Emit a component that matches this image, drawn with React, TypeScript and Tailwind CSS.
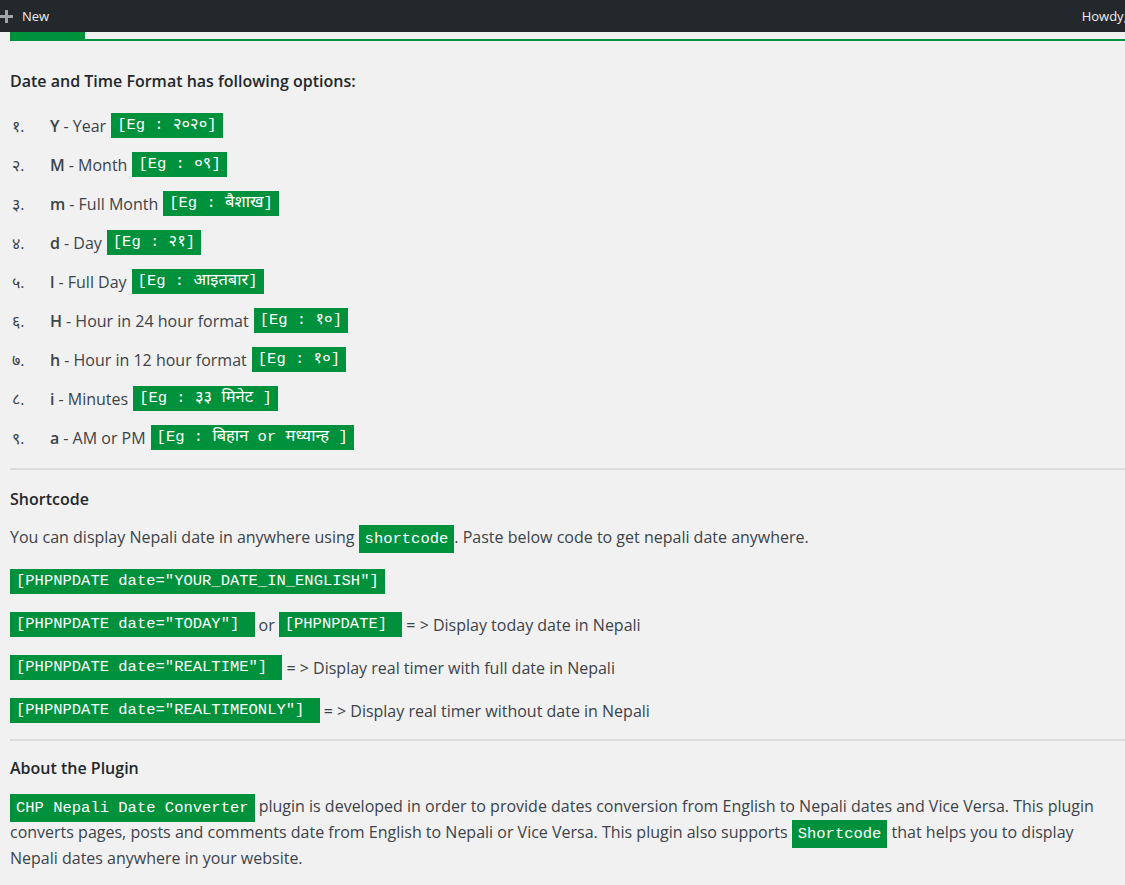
import React from "react";

const sans = "font-['Open_Sans','Noto_Sans','Noto_Sans_Devanagari',sans-serif]";
const mono = "font-['Liberation_Mono','Noto_Sans_Devanagari',monospace]";

// Devanagari runs get a slightly larger size, like the original fallback font
function Deva({ text }: { text: string }) {
  const parts = text.split(/([\u0900-\u097F]+)/);
  return (
    <>
      {parts.map((p, i) =>
        /[\u0900-\u097F]/.test(p) ? (
          <span key={i} className="font-['Noto_Sans_Devanagari',sans-serif] text-[16.5px]">
            {p}
          </span>
        ) : (
          <React.Fragment key={i}>{p}</React.Fragment>
        )
      )}
    </>
  );
}

function Code({ children, inline }: { children: React.ReactNode; inline?: boolean }) {
  return (
    <code
      className={`${mono} whitespace-pre bg-[#00913c] px-[6px] text-[15.5px] text-white ${
        inline ? "py-[5px] leading-none" : "inline-block h-[25px] leading-[25px]"
      }`}
    >
      {children}
    </code>
  );
}

const formats = [
  { n: "१.", k: "Y", label: "Year", eg: "[Eg : २०२०]" },
  { n: "२.", k: "M", label: "Month", eg: "[Eg : ०९]" },
  { n: "३.", k: "m", label: "Full Month", eg: "[Eg : बैशाख]" },
  { n: "४.", k: "d", label: "Day", eg: "[Eg : २१]" },
  { n: "५.", k: "l", label: "Full Day", eg: "[Eg : आइतबार]" },
  { n: "६.", k: "H", label: "Hour in 24 hour format", eg: "[Eg : १०]" },
  { n: "७.", k: "h", label: "Hour in 12 hour format", eg: "[Eg : १०]" },
  { n: "८.", k: "i", label: "Minutes", eg: "[Eg : ३३ मिनेट ]" },
  { n: "९.", k: "a", label: "AM or PM", eg: "[Eg : बिहान or मध्यान्ह ]" },
];

export default function App() {
  return (
    <div className={`${sans} min-h-[885px] overflow-hidden bg-[#f1f1f1] text-[#3c434a]`}>
      {/* admin bar */}
      <div className="flex h-8 items-center justify-between bg-[#23282d] text-[13px] text-[#eeeeee]">
        <div className="flex items-center pt-[1px]">
          <svg width="13" height="13" viewBox="0 0 13 13" className="mr-[9px]">
            <rect x="0" y="5" width="13" height="3" fill="#a0a5aa" />
            <rect x="5" y="0" width="3" height="13" fill="#a0a5aa" />
          </svg>
          <span>New</span>
        </div>
        <span className="mr-[-2px] pt-[1px]">Howdy,</span>
      </div>

      <div className="pl-[10px]">
        {/* tabs */}
        <div className="border-b-2 border-[#00913c]">
          <div className="h-[7px] w-[75px] bg-[#00913c]" />
        </div>

        <h3 className="mt-[28px] text-[16px] font-semibold leading-[24px] text-[#23282d]">
          Date and Time Format has following options:
        </h3>

        <ol className="mt-[20px] flex flex-col gap-[14px] text-[16px]">
          {formats.map((f) => (
            <li key={f.k} className="flex h-[25px] items-center">
              <span className="w-[40px] pl-[2px]">{f.n}</span>
              <b className="font-semibold">{f.k}</b>
              <span className="ml-[4px] mr-[5px]">- {f.label}</span>
              <Code>
                <Deva text={f.eg} />
              </Code>
            </li>
          ))}
        </ol>

        <hr className="mt-[18px] border-t-2 border-[#dcdcde]" />

        <h3 className="mt-[17px] text-[16px] font-semibold leading-[24px] text-[#23282d]">Shortcode</h3>
        <p className="mt-[13px] text-[16px] leading-[26px]">
          You can display Nepali date in anywhere using <Code inline>shortcode</Code>. Paste below code to get nepali
          date anywhere.
        </p>

        <div className="mt-[19px] flex flex-col gap-[18px] text-[16px]">
          <div className="flex h-[25px] items-center">
            <Code>[PHPNPDATE date="YOUR_DATE_IN_ENGLISH"]</Code>
          </div>
          <div className="flex h-[25px] items-center">
            <Code>[PHPNPDATE date="TODAY"] </Code>
            <span className="mx-[4px]">or</span>
            <Code>[PHPNPDATE] </Code>
            <span className="ml-[4px]">= &gt; Display today date in Nepali</span>
          </div>
          <div className="flex h-[25px] items-center">
            <Code>[PHPNPDATE date="REALTIME"] </Code>
            <span className="ml-[4px]">= &gt; Display real timer with full date in Nepali</span>
          </div>
          <div className="flex h-[25px] items-center">
            <Code>[PHPNPDATE date="REALTIMEONLY"] </Code>
            <span className="ml-[4px]">= &gt; Display real timer without date in Nepali</span>
          </div>
        </div>

        <hr className="mt-[16px] border-t-2 border-[#dcdcde]" />

        <h3 className="mt-[15px] text-[16px] font-semibold leading-[24px] text-[#23282d]">About the Plugin</h3>
        <p className="mt-[13px] w-[1100px] text-[16px] leading-[26px]">
          <Code inline>CHP Nepali Date Converter</Code> plugin is developed in order to provide dates conversion from
          English to Nepali dates and Vice Versa. This plugin converts pages, posts and comments date from English to
          Nepali or Vice Versa. This plugin also supports <Code inline>Shortcode</Code> that helps you to display
          Nepali dates anywhere in your website.
        </p>
      </div>
    </div>
  );
}
